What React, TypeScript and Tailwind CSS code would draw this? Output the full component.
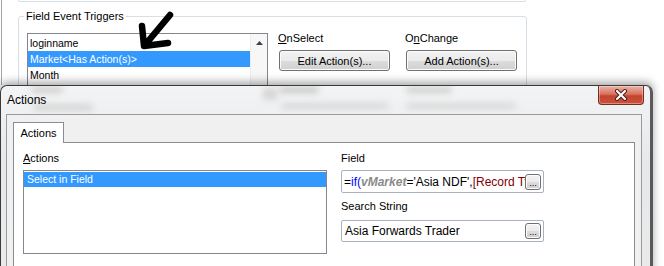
import React from "react";

const btnBg =
  "bg-[linear-gradient(to_bottom,#f2f2f2_0%,#ebebeb_50%,#dddddd_51%,#cfcfcf_100%)]";

function WinButton({ label }: { label: string }) {
  return (
    <div
      className={`ml-[1px] mt-[5px] flex h-[21px] w-[111px] items-center justify-center rounded-[3px] border border-[#707070] ${btnBg} text-[11px] leading-[14px] text-black shadow-[inset_0_0_0_1px_#fcfcfc]`}
    >
      {label}
    </div>
  );
}

function Ellipsis() {
  return (
    <div
      className={`absolute right-[2px] top-1/2 flex h-[16px] w-[16px] -translate-y-1/2 items-end justify-center rounded-[3px] border border-[#707070] ${btnBg} pb-[2px] text-[9px] leading-[8px] text-black shadow-[inset_0_0_0_1px_#fcfcfc]`}
    >
      ...
    </div>
  );
}

export default function App() {
  return (
    <div className="relative h-[266px] w-[664px] overflow-hidden bg-white font-['Liberation_Sans',Arial,sans-serif] text-black">
      {/* Parent dialog (behind) */}
      <div className="relative ml-[1px] h-[85px] overflow-hidden border-l border-[#a3a3a3]">
        <div className="ml-[16px] h-[2px] w-[508px] rounded-b-[3px] border-x border-b border-[#d5dfe5]" />
        <div className="relative ml-[16px] mt-[14px] h-[100px] w-[509px] rounded-[3px] border border-[#d5dfe5]">
          <span className="absolute left-[5px] top-[-8px] bg-white px-[2px] text-[11px] leading-[14px]">
            Field Event Triggers
          </span>
          <div className="flex items-start pl-[8px] pt-[16px]">
            {/* listbox */}
            <div className="flex h-[80px] w-[241px] border border-[#828790] bg-white">
              <div className="flex-1 pt-[1px] text-[10.5px]">
                <div className="h-[16px] pl-[2px] leading-[16px]">loginname</div>
                <div className="h-[16px] bg-[#3399ff] pl-[2px] leading-[16px] text-white">
                  Market&lt;Has Action(s)&gt;
                </div>
                <div className="h-[16px] pl-[2px] leading-[16px]">Month</div>
              </div>
              <div className="flex w-[17px] justify-center border-l border-[#ececec] bg-[#f7f7f7] pt-[7px]">
                <svg width="7" height="4" viewBox="0 0 7 4">
                  <path d="M0 4 L3.5 0 L7 4 Z" fill="#404040" />
                </svg>
              </div>
            </div>
            {/* OnSelect */}
            <div className="-mt-[2px] ml-[10px] flex flex-col">
              <div className="h-[14px] text-[11px] leading-[14px]">
                <span className="underline">O</span>nSelect
              </div>
              <WinButton label="Edit Action(s)..." />
            </div>
            {/* OnChange */}
            <div className="-mt-[2px] ml-[15px] flex flex-col">
              <div className="h-[14px] text-[11px] leading-[14px]">
                O<span className="underline">n</span>Change
              </div>
              <WinButton label="Add Action(s)..." />
            </div>
          </div>
        </div>
        {/* hand-drawn arrow */}
        <svg className="absolute left-0 top-0" width="200" height="60" viewBox="0 0 200 60">
          <path
            d="M168 15 L143 45 M140 26 L142 46 L166 43"
            fill="none"
            stroke="#000"
            strokeWidth="6.5"
            strokeLinecap="round"
            strokeLinejoin="round"
          />
        </svg>
      </div>

      {/* Actions dialog */}
      <div className="relative flex h-[190px] w-[653px] flex-col rounded-t-[7px] border-l border-t border-r-[3px] border-[#3a3a3a] border-r-[#5a5a5a] bg-[linear-gradient(to_bottom,#f3f4f5,#e6e8ea_40%,#eaeaea)] shadow-[0_-3px_9px_rgba(0,0,0,0.35)]">
        {/* blurred glass reflections of the window behind */}
        <div className="pointer-events-none absolute left-0 top-0 h-[28px] w-full overflow-hidden">
          <div className="absolute left-[30px] top-[1px] h-[6px] w-[32px] rounded bg-[#cdcdcd] blur-[3px]" />
          <div className="absolute left-[32px] top-[18px] h-[7px] w-[60px] rounded bg-[#d6d6d6] blur-[3px]" />
          <div className="absolute left-[262px] top-[2px] h-[12px] w-[14px] bg-[#d6d6d6] blur-[3px]" />
          <div className="absolute left-[278px] top-[1px] h-[6px] w-[40px] rounded bg-[#c6c6c6] blur-[3px]" />
          <div className="absolute left-[280px] top-[17px] h-[6px] w-[108px] rounded bg-[#d8d8d8] blur-[3px]" />
          <div className="absolute left-[405px] top-[1px] h-[6px] w-[46px] rounded bg-[#cecece] blur-[3px]" />
          <div className="absolute left-[405px] top-[17px] h-[6px] w-[110px] rounded bg-[#d8d8d8] blur-[3px]" />
        </div>

        {/* title bar */}
        <div className="relative flex h-[28px] items-start justify-between pr-[6px]">
          <div className="pl-[6px] pt-[7px] text-[12px] leading-[14px]">Actions</div>
          <div className="flex h-[19px] w-[46px] items-center justify-center rounded-b-[4px] border border-t-0 border-[#7a2a20] bg-[linear-gradient(to_bottom,#ecb3a6_0%,#d8735f_45%,#c3432f_55%,#c9533c_100%)] shadow-[inset_0_0_0_1px_rgba(255,255,255,0.35)]">
            <svg width="14" height="12" viewBox="0 0 14 12">
              <path d="M3 2 L11 10 M11 2 L3 10" stroke="#4a1a14" strokeWidth="4" strokeLinecap="round" />
              <path d="M3 2 L11 10 M11 2 L3 10" stroke="#ffffff" strokeWidth="2.2" strokeLinecap="round" />
            </svg>
          </div>
        </div>

        {/* client area */}
        <div className="flex flex-1">
          <div className="ml-[5px] flex w-[636px] flex-col border-x border-t border-[#9a9a9a] bg-[#f0f0f0] pl-[6px] pt-[7px]">
            {/* tab header */}
            <div className="relative z-10 -mb-px flex h-[21px] w-[51px] items-center justify-center border-x border-t border-[#898c95] bg-white text-[11px] leading-[14px]">
              Actions
            </div>
            {/* tab page */}
            <div className="flex w-[622px] flex-1 border border-[#898c95] bg-white pl-[9px] pt-[8px]">
              <div className="flex w-[304px] flex-col">
                <div className="h-[14px] text-[11px] leading-[14px]">
                  <span className="underline">A</span>ctions
                </div>
                <div className="mt-[5px] h-[84px] border border-[#828790] bg-white pt-[1px]">
                  <div className="h-[15px] bg-[#3399ff] pl-[3px] text-[10.5px] leading-[15px] text-white">
                    Select in Field
                  </div>
                </div>
              </div>
              <div className="ml-[14px] flex w-[203px] flex-col">
                <div className="h-[14px] text-[11px] leading-[14px]">Field</div>
                <div className="relative mt-[5px] flex h-[23px] items-center rounded-[2px] border border-[#a9b3c0] bg-white pl-[2px] text-[12px] leading-[14px]">
                  <div className="w-[181px] overflow-hidden whitespace-nowrap">
                    <span>=</span>
                    <span className="text-[#0000ff]">if(</span>
                    <span className="font-bold italic text-[#8a8a8a]">vMarket</span>
                    <span>='Asia NDF',</span>
                    <span className="text-[#800000]">[Record Type]</span>
                  </div>
                  <Ellipsis />
                </div>
                <div className="mt-[6px] h-[14px] text-[11px] leading-[14px]">Search String</div>
                <div className="relative mt-[7px] flex h-[22px] items-center whitespace-nowrap rounded-[2px] border border-[#a9b3c0] bg-white pl-[3px] text-[12px] leading-[14px]">
                  Asia Forwards Trader
                  <Ellipsis />
                </div>
              </div>
            </div>
          </div>
          <div className="w-[7px]" />
        </div>
      </div>
    </div>
  );
}
